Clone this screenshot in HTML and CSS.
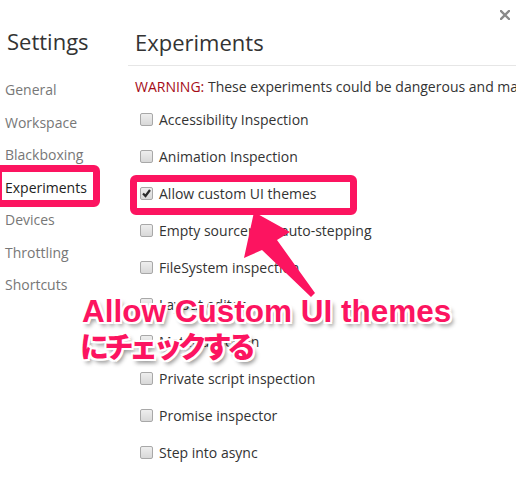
FILE: index.html
```html
<!DOCTYPE html>
<html lang="ja">
<head>
<meta charset="utf-8">
<title>Settings - Experiments</title>
<link rel="stylesheet" href="styles.css">
</head>
<body>
<div class="settings">
  <aside class="sidebar">
    <h1 class="title">Settings</h1>
    <ul class="nav">
      <li>General</li>
      <li>Workspace</li>
      <li>Blackboxing</li>
      <li class="active">Experiments</li>
      <li>Devices</li>
      <li>Throttling</li>
      <li>Shortcuts</li>
    </ul>
  </aside>
  <main class="main">
    <header class="head">
      <h2 class="title">Experiments</h2>
      <span class="close"><svg width="10" height="10" viewBox="0 0 10 10"><path d="M1 1L9 9M9 1L1 9" stroke="#8a8a8a" stroke-width="2.4" stroke-linecap="square"/></svg></span>
    </header>
    <p class="warning"><span class="warn">WARNING:</span> These experiments could be dangerous and may require restart.</p>
    <ul class="exps">
      <li><span class="cb"></span>Accessibility Inspection</li>
      <li><span class="cb"></span>Animation Inspection</li>
      <li><span class="cb checked"><svg width="11" height="11" viewBox="0 0 11 11"><path d="M2 5.5L4.5 8L9 2" fill="none" stroke="#2a2a2a" stroke-width="2.2"/></svg></span>Allow custom UI themes</li>
      <li><span class="cb"></span>Empty sourcemap auto-stepping</li>
      <li><span class="cb"></span>FileSystem inspection</li>
      <li><span class="cb"></span>Layout editor</li>
      <li><span class="cb"></span>Material design</li>
      <li><span class="cb"></span>Private script inspection</li>
      <li><span class="cb"></span>Promise inspector</li>
      <li><span class="cb"></span>Step into async</li>
    </ul>
  </main>
</div>
<div class="mark mark-nav"></div>
<div class="mark mark-exp"></div>
<svg class="arrow" width="516" height="478" viewBox="0 0 516 478">
  <polygon points="254,212 290,232 277,240 315,293 311,297 262,250 244,258" fill="#fc1460"/>
</svg>
<div class="callout">
  <div class="l1">Allow Custom UI themes</div>
  <div class="l2">にチェックする</div>
</div>
</body>
</html>
```

FILE: styles.css
```css
html, body {
  margin: 0;
  padding: 0;
  background: #fff;
}
body {
  width: 516px;
  height: 478px;
  overflow: hidden;
  position: relative;
  font-family: "Open Sans", "Noto Sans", sans-serif;
  color: #333;
}
.settings {
  display: flex;
  width: 516px;
}
.sidebar {
  width: 128px;
  flex: none;
}
.title {
  margin: 0;
  font-weight: normal;
  font-size: 22px;
  line-height: 28px;
  color: #333;
}
.sidebar .title {
  padding: 27px 0 0 7px;
}
.nav {
  list-style: none;
  margin: 19px 0 0;
  padding: 0;
}
.nav li {
  line-height: 32.5px;
  padding-left: 5px;
  font-size: 14px;
  color: #777;
}
.nav li.active {
  color: #222;
}
.main {
  flex: 1;
  min-width: 0;
  overflow: hidden;
}
.head {
  display: flex;
  justify-content: space-between;
  align-items: flex-start;
  border-bottom: 1px solid #e6e6e6;
  padding: 28px 0 9px 7px;
}
.close {
  display: flex;
  margin: -18px 6px 0 0;
}
.warning {
  margin: 11px 0 0;
  padding-left: 7px;
  line-height: 20px;
  font-size: 14px;
  white-space: nowrap;
}
.warn {
  color: #a50b17;
}
.exps {
  list-style: none;
  margin: 4px 0 0;
  padding: 0;
}
.exps li {
  display: flex;
  align-items: center;
  height: 37px;
  padding-left: 12px;
  font-size: 14px;
  white-space: nowrap;
}
.cb {
  width: 13px;
  height: 13px;
  box-sizing: border-box;
  border: 1px solid #a8a8a8;
  border-radius: 2px;
  background: linear-gradient(#eeeeee, #d8d8d8);
  margin-right: 6px;
  display: flex;
  align-items: center;
  justify-content: center;
  flex: none;
}
.mark {
  position: absolute;
  border: 7px solid #fc1460;
  border-radius: 6px;
  box-sizing: border-box;
}
.mark-nav {
  left: -5px;
  top: 165px;
  width: 105px;
  height: 42px;
}
.mark-exp {
  left: 130px;
  top: 175px;
  width: 227px;
  height: 40px;
}
.arrow {
  position: absolute;
  left: 0;
  top: 0;
}
.callout {
  position: absolute;
  left: 82px;
  top: 293px;
  color: #fc1460;
  font-weight: bold;
  white-space: nowrap;
  text-shadow:
    2px 0 0 #fff, -2px 0 0 #fff, 0 2px 0 #fff, 0 -2px 0 #fff,
    2px 2px 0 #fff, -2px -2px 0 #fff, 2px -2px 0 #fff, -2px 2px 0 #fff,
    3px 4px 4px rgba(0, 0, 0, 0.45);
}
.l1 {
  font-family: "Liberation Sans", Arial, sans-serif;
  font-size: 31.5px;
  line-height: 36px;
}
.l2 {
  font-family: "Noto Sans CJK JP", sans-serif;
  font-weight: 900;
  font-size: 29px;
  line-height: 33px;
  letter-spacing: -4.5px;
  margin-left: -2px;
}
```
